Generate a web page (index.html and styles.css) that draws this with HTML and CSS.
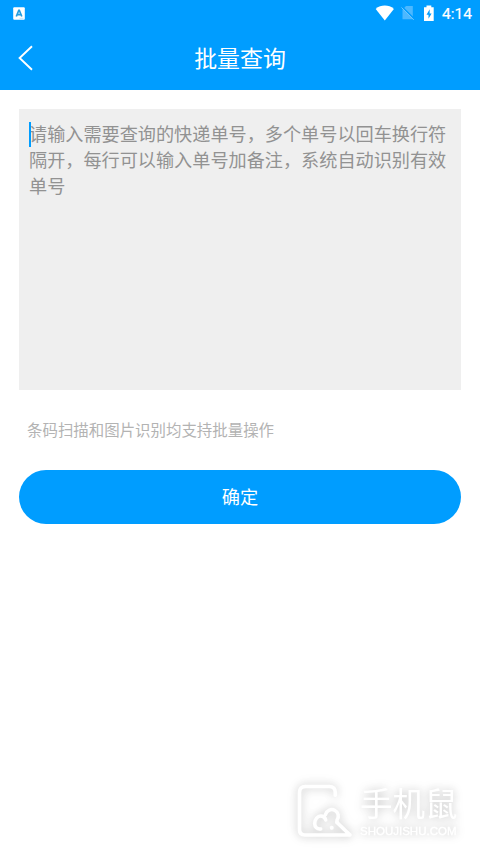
FILE: index.html
```html
<!DOCTYPE html>
<html lang="zh-CN">
<head>
<meta charset="utf-8">
<title>批量查询</title>
<link rel="stylesheet" href="styles.css">
</head>
<body>
<div class="screen">
  <div class="statusbar">
    <svg class="badge" width="12" height="13" viewBox="0 0 12 13"><rect x=".2" y=".3" width="11.6" height="12.4" rx="1" fill="#fff"/><path d="M3.300 9.500 5.800 3.300h.5l2.500 6.200M4.300 7.600h3.600" fill="none" stroke="#249ddf" stroke-width="1.700"/><path d="M6.500 11.300h4" stroke="#a8d8f5" stroke-width=".7"/></svg>
    <div class="status-icons">
      <svg class="wifi" width="20" height="16" viewBox="0 0 20 16"><path d="M.7 3.900Q4.700.6 9.800.6t9.100 3.300L9.800 15.400Z" fill="#fff"/></svg>
      <svg class="sim" width="14" height="16" viewBox="0 0 14 16"><path d="M5 1h6.800v13.200H1.500V4.700Z" fill="#4db8ff"/><path d="M.8 1.500 13.600 14.300" stroke="#009dff" stroke-width="1.600"/><path d="M.5 2.500 12.800 14.900" stroke="#70c7ff" stroke-width="1"/></svg>
      <svg class="battery" width="12" height="17" viewBox="0 0 12 17"><path d="M3.500.6h4.800v1.600h2.400v13.900H1V2.200h2.500Z" fill="#fff"/><path d="M6.700 4.300 3.500 9.700h2v4.100L8.600 8.400h-2Z" fill="#009dff"/></svg>
      <span class="clock">4:14</span>
    </div>
  </div>
  <header class="navbar">
    <svg class="back" width="18" height="28" viewBox="0 0 18 28"><path d="M15 2.200 2.600 14 15 25.800" fill="none" stroke="#fff" stroke-width="1.900"/></svg>
    <h1 class="title">批量查询</h1>
  </header>
  <main class="content">
    <div class="input-box"><span class="caret"></span>请输入需要查询的快递单号，多个单号以回车换行符<br>隔开，每行可以输入单号加备注，系统自动识别有效<br>单号</div>
    <p class="hint">条码扫描和图片识别均支持批量操作</p>
    <button class="confirm" type="button">确定</button>
  </main>
  <footer class="watermark">
    <svg class="mouse" width="56" height="54" viewBox="0 0 56 54"><path d="M38.300 11.300V8.500q0-6-6-6H8.500q-6 0-6 6v37q0 5.500 5.500 5.500H53L40 38.500" fill="none" stroke="#fff" stroke-width="3.600" stroke-linecap="round" stroke-linejoin="round"/><path d="M23.700 45c-3.500.6-6-2-6-5.500 0-4.500 3-7.500 6-7.500s4.500 1.500 5 4M28.500 30.500a6.500 6.500 0 1 1 11.500 5.500v2.500" fill="none" stroke="#fff" stroke-width="3.500" stroke-linecap="round" stroke-linejoin="round"/><circle cx="34.700" cy="43.800" r="2" fill="#fff"/></svg>
    <div class="brand">
      <span class="brand-name">手机鼠</span>
      <span class="brand-url">SHOUJISHU.COM</span>
    </div>
  </footer>
</div>
</body>
</html>
```
FILE: styles.css
```css
* {
  box-sizing: border-box;
}

body {
  margin: 0;
  background: #fff;
  font-family: "Noto Sans CJK SC", sans-serif;
}

.screen {
  display: flex;
  flex-direction: column;
  width: 480px;
  height: 854px;
  overflow: hidden;
}

.statusbar {
  display: flex;
  justify-content: space-between;
  align-items: center;
  height: 26px;
  padding: 0 8px 0 13px;
  background: #009dff;
}

.status-icons {
  display: flex;
  align-items: center;
}

.sim {
  margin-left: 6px;
}

.battery {
  margin-left: 8px;
}

.clock {
  margin-left: 7px;
  padding-top: 2px;
  color: #fff;
  font: 400 15.5px/24px Roboto, sans-serif;
  -webkit-text-stroke: 0.2px #fff;
}

.navbar {
  display: grid;
  grid-template-columns: 60px 1fr 60px;
  align-items: center;
  height: 64px;
  background: #009dff;
}

.back {
  margin-left: 17px;
}

.title {
  margin: 0;
  padding-bottom: 2px;
  color: #fff;
  font-size: 22.9px;
  font-weight: 400;
  line-height: 34px;
  text-align: center;
}

.content {
  display: flex;
  flex-direction: column;
  padding: 19px 19px 0;
}

.input-box {
  position: relative;
  height: 281px;
  padding: 11px 10px;
  background: #efefef;
  color: #929292;
  font-size: 18.15px;
  line-height: 26px;
  white-space: nowrap;
}

.caret {
  position: absolute;
  top: 13px;
  left: 10px;
  width: 2px;
  height: 25px;
  background: #009dff;
}

.hint {
  margin: 27px 0 0 8px;
  color: #b3b3b3;
  font-size: 15.45px;
  line-height: 24px;
}

.confirm {
  height: 54px;
  margin-top: 29px;
  padding: 0 0 2px;
  border: 0;
  border-radius: 27px;
  background: #009dff;
  color: #fff;
  font: 400 18.2px/52px "Noto Sans CJK SC", sans-serif;
}

.watermark {
  display: flex;
  gap: 7px;
  margin-top: auto;
  padding: 0 0 16px 297px;
  filter: drop-shadow(0 0 5px rgba(0, 0, 0, 0.2)) drop-shadow(0 0 6px rgba(0, 0, 0, 0.07));
}

.brand {
  display: flex;
  flex-direction: column;
  color: #fff;
}

.brand-name {
  font-size: 32.5px;
  line-height: 36px;
}

.brand-url {
  margin-top: 4px;
  font: 11.5px/14px "Liberation Sans", sans-serif;
  -webkit-text-stroke: 0.3px #fff;
}
```
